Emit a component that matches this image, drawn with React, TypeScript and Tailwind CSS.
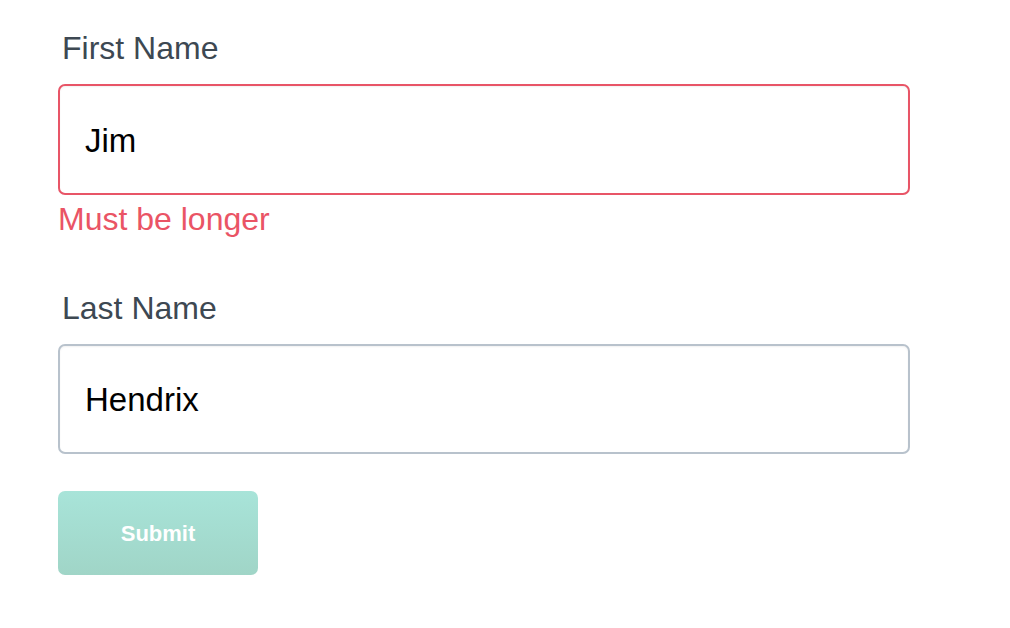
export default function App() {
  return (
    <div className="min-h-screen bg-white font-['Liberation_Sans',Arial,sans-serif]">
      <form className="ml-[58px] flex w-[852px] flex-col pt-[30px]">
        <label className="ml-[4px] text-[32px] leading-[37px] text-[#3d4852]">First Name</label>
        <input
          defaultValue="Jim"
          className="mt-[17px] h-[111px] w-full rounded-[7px] border-2 border-[#e85567] bg-white px-[25px] pt-[3px] text-[33px] text-black outline-none shadow-[inset_0_1px_2px_rgba(0,0,0,0.06)]"
        />
        <span className="mt-[6px] text-[32px] leading-[37px] text-[#ea5465]">Must be longer</span>

        <label className="ml-[4px] mt-[52px] text-[32px] leading-[37px] text-[#3d4852]">Last Name</label>
        <input
          defaultValue="Hendrix"
          className="mt-[17px] h-[110px] w-full rounded-[7px] border-2 border-[#b8c2cc] bg-white px-[25px] pt-[2px] text-[33px] text-black outline-none shadow-[inset_0_1px_2px_rgba(0,0,0,0.06)]"
        />

        <button
          type="submit"
          className="mt-[37px] h-[84px] w-[200px] rounded-[7px] bg-gradient-to-b from-[#a8e4d9] to-[#a0d5c7] text-[22px] font-bold text-white"
        >
          Submit
        </button>
      </form>
    </div>
  );
}
